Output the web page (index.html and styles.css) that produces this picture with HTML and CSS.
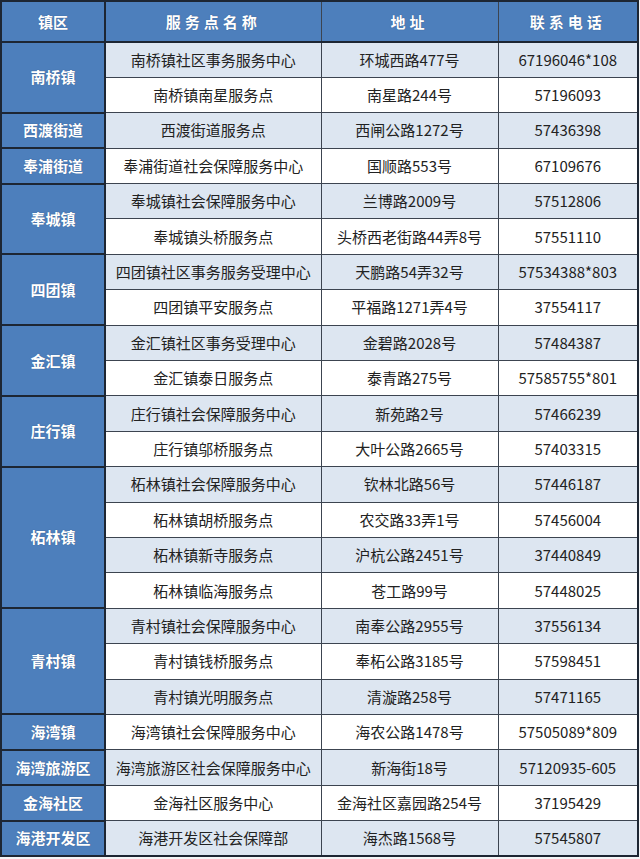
FILE: index.html
```html
<!DOCTYPE html>
<html lang="zh-CN">
<head>
<meta charset="utf-8">
<title>服务点</title>
<link rel="stylesheet" href="styles.css">
</head>
<body>
<table class="tbl">
<colgroup><col class="c1"><col class="c2"><col class="c3"><col class="c4"></colgroup>
<thead>
<tr class="head"><th class="h-dist">镇区</th><th class="h-sp">服务点名称</th><th class="h-sp">地址</th><th class="h-sp">联系电话</th></tr>
</thead>
<tbody>
<tr class="odd"><td class="dist" rowspan="2">南桥镇</td><td>南桥镇社区事务服务中心</td><td>环城西路477号</td><td>67196046*108</td></tr>
<tr class="even in"><td>南桥镇南星服务点</td><td>南星路244号</td><td>57196093</td></tr>
<tr class="odd"><td class="dist">西渡街道</td><td>西渡街道服务点</td><td>西闸公路1272号</td><td>57436398</td></tr>
<tr class="even"><td class="dist">奉浦街道</td><td>奉浦街道社会保障服务中心</td><td>国顺路553号</td><td>67109676</td></tr>
<tr class="odd"><td class="dist" rowspan="2">奉城镇</td><td>奉城镇社会保障服务中心</td><td>兰博路2009号</td><td>57512806</td></tr>
<tr class="even in"><td>奉城镇头桥服务点</td><td>头桥西老街路44弄8号</td><td>57551110</td></tr>
<tr class="odd"><td class="dist" rowspan="2">四团镇</td><td>四团镇社区事务服务受理中心</td><td>天鹏路54弄32号</td><td>57534388*803</td></tr>
<tr class="even in"><td>四团镇平安服务点</td><td>平福路1271弄4号</td><td>37554117</td></tr>
<tr class="odd"><td class="dist" rowspan="2">金汇镇</td><td>金汇镇社区事务受理中心</td><td>金碧路2028号</td><td>57484387</td></tr>
<tr class="even in"><td>金汇镇泰日服务点</td><td>泰青路275号</td><td>57585755*801</td></tr>
<tr class="odd"><td class="dist" rowspan="2">庄行镇</td><td>庄行镇社会保障服务中心</td><td>新苑路2号</td><td>57466239</td></tr>
<tr class="even in"><td>庄行镇邬桥服务点</td><td>大叶公路2665号</td><td>57403315</td></tr>
<tr class="odd"><td class="dist" rowspan="4">柘林镇</td><td>柘林镇社会保障服务中心</td><td>钦林北路56号</td><td>57446187</td></tr>
<tr class="even in"><td>柘林镇胡桥服务点</td><td>农交路33弄1号</td><td>57456004</td></tr>
<tr class="odd in"><td>柘林镇新寺服务点</td><td>沪杭公路2451号</td><td>37440849</td></tr>
<tr class="even in"><td>柘林镇临海服务点</td><td>苍工路99号</td><td>57448025</td></tr>
<tr class="odd"><td class="dist" rowspan="3">青村镇</td><td>青村镇社会保障服务中心</td><td>南奉公路2955号</td><td>37556134</td></tr>
<tr class="even in"><td>青村镇钱桥服务点</td><td>奉柘公路3185号</td><td>57598451</td></tr>
<tr class="odd in"><td>青村镇光明服务点</td><td>清漩路258号</td><td>57471165</td></tr>
<tr class="even"><td class="dist">海湾镇</td><td>海湾镇社会保障服务中心</td><td>海农公路1478号</td><td>57505089*809</td></tr>
<tr class="odd"><td class="dist">海湾旅游区</td><td>海湾旅游区社会保障服务中心</td><td>新海街18号</td><td>57120935-605</td></tr>
<tr class="even"><td class="dist">金海社区</td><td>金海社区服务中心</td><td>金海社区嘉园路254号</td><td>37195429</td></tr>
<tr class="odd"><td class="dist">海港开发区</td><td>海港开发区社会保障部</td><td>海杰路1568号</td><td>57545807</td></tr>
</tbody>
</table>
</body>
</html>
```
FILE: styles.css
```css
html, body {
  margin: 0;
  padding: 0;
  background: #f4f5f7;
}
body {
  font-family: "Noto Sans CJK SC", "Noto Sans", sans-serif;
  color: #222;
}
.tbl {
  width: 637px;
  table-layout: fixed;
  border-collapse: collapse;
  border: 2px solid #1d2633;
  font-size: 15px;
}
.c1 { width: 104px; }
.c2 { width: 216px; }
.c3 { width: 177px; }
.c4 { width: 140px; }
.tbl th,
.tbl td {
  padding: 0;
  text-align: center;
  vertical-align: middle;
  white-space: nowrap;
  border: 1px solid #3c4450;
  line-height: 18px;
}
.head {
  height: 41px;
  background: #4d7fbc;
  color: #fff;
}
.head th {
  font-weight: bold;
  font-size: 15px;
  border-bottom: 2px solid #1d2633;
  text-shadow: 0 0 1px rgba(30,50,90,0.6);
}
.head .h-sp {
  letter-spacing: 4px;
}
.head .h-dist {
  border-right: 2px solid #1d2633;
}
.tbl tbody tr {
  height: 35.4px;
}
.odd { background: #dde6f1; }
.even { background: #ffffff; }
.in td { border-top-color: #5a6270; }
.tbl td.dist {
  background: #4d7fbc;
  color: #fff;
  font-weight: bold;
  border-right: 2px solid #1d2633;
  border-top: 2px solid #1d2633;
  text-shadow: 0 0 1px rgba(30,50,90,0.6);
}
```
